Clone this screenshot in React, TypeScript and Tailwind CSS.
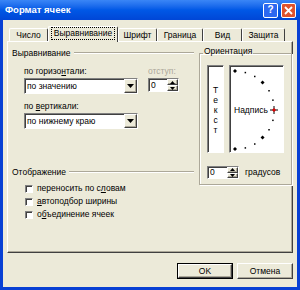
import type {FC, ReactNode} from "react";

const ui = "font-['Liberation_Sans',Arial,sans-serif] text-[8.5px] leading-none text-black";
const face = "bg-[#ecead9]";
const raised = "border border-t-white border-l-white border-r-[#404040] border-b-[#404040] shadow-[inset_-1px_-1px_0_#aca899]";
const sunken = "border border-t-[#808080] border-l-[#808080] border-r-white border-b-white shadow-[inset_1px_1px_0_#404040]";

const Tri: FC<{up?: boolean}> = ({up}) => (
    <svg width="5" height="3" viewBox="0 0 5 3">
        <path d={up ? "M0 3h5L2.5 0z" : "M0 0h5L2.5 3z"} fill="#000"/>
    </svg>
);

const Section: FC<{title: string}> = ({title}) => (
    <div className="h-[12px] flex items-center">
        <span>{title}</span>
        <div className="flex-1 ml-[3px] border-t border-t-[#aca899] border-b border-b-white"/>
    </div>
);

const Select: FC<{value: string}> = ({value}) => (
    <div className={`h-[16px] w-[114px] bg-white flex ${sunken}`}>
        <span className="flex-1 pl-[2px] flex items-center">{value}</span>
        <div className={`w-[13px] ${face} ${raised} flex items-center justify-center`}>
            <svg width="7" height="4" viewBox="0 0 7 4"><path d="M0 0h7L3.5 4z" fill="#000"/></svg>
        </div>
    </div>
);

const Spin: FC<{value: string; className: string}> = ({value, className}) => (
    <div className={`flex bg-white ${sunken} ${className}`}>
        <span className="flex-1 pl-[2px] flex items-center">{value}</span>
        <div className="w-[11px] flex flex-col">
            <div className={`flex-1 ${face} ${raised} flex items-center justify-center`}><Tri up/></div>
            <div className={`flex-1 ${face} ${raised} flex items-center justify-center`}><Tri/></div>
        </div>
    </div>
);

const Check: FC<{children: ReactNode}> = ({children}) => (
    <div className="h-[13px] flex items-center">
        <div className={`w-[8px] h-[8px] bg-white ml-[13px] ${sunken}`}/>
        <span className="ml-[4px]">{children}</span>
    </div>
);

const Tab: FC<{label: string; className: string; active?: boolean}> = ({label, className, active}) => (
    <div className={`${className} flex items-center justify-center border-t border-l border-r border-t-white border-l-white border-r-[#404040] rounded-t-[2px] ${active ? `h-[16px] -mb-px relative z-10 ${face} pb-[2px]` : "h-[13px]"}`}>
        {active
            ? <span className="border border-dotted border-black px-[2px] py-[1px]">{label}</span>
            : <span>{label}</span>}
    </div>
);

const Dial: FC = () => {
    const dots = [];
    for (let a = -90; a <= 90; a += 15) {
        const r = (a * Math.PI) / 180;
        const x = 5 + 39 * Math.cos(r);
        const y = 44 - 39 * Math.sin(r);
        if (a === 0) continue;
        const big = a % 45 === 0;
        dots.push(big
            ? <path key={a} d={`M${x - 2} ${y}L${x} ${y - 2}L${x + 2} ${y}L${x} ${y + 2}z`} fill="#000"/>
            : <rect key={a} x={x - 0.5} y={y - 0.5} width="1.5" height="1.5" fill="#000"/>);
    }
    return (
        <svg width="53" height="86" viewBox="0 0 53 86" className="block">
            {dots}
            <text x="4" y="47" fontSize="8.5" fontFamily="Liberation Sans, Arial, sans-serif" fill="#000">Надпись</text>
            <path d="M40 44h8M44 40v8" stroke="#000" strokeWidth="1"/>
            <path d="M44 42l2 2-2 2-2-2z" fill="#e00000"/>
        </svg>
    );
};

export default function App() {
    return (
        <div className={`w-[300px] h-[290px] flex flex-col bg-[#0840d4] ${ui}`}>
            <div className="h-[20px] flex items-center pl-[5px] pr-[4px] bg-linear-to-b from-[#3a86f6] via-[#0058e6] to-[#0046d6]">
                <span className="flex-1 text-white font-bold text-[9.5px]">Формат ячеек</span>
                <div className="w-[15px] h-[15px] rounded-[2px] border border-white bg-[#2c68f0] flex items-center justify-center text-white font-bold text-[10px]">?</div>
                <div className="w-[15px] h-[15px] ml-[3px] rounded-[2px] border border-white bg-[#e0532d] flex items-center justify-center">
                    <svg width="9" height="9" viewBox="0 0 9 9"><path d="M1 1l7 7M8 1L1 8" stroke="#fff" strokeWidth="1.8"/></svg>
                </div>
            </div>
            <div className={`flex-1 mx-[3px] mb-[3px] ${face} flex flex-col`}>
                <div className="h-[21px] flex items-end pl-[6px]">
                    <Tab label="Число" className="w-[39px]"/>
                    <Tab label="Выравнивание" className="w-[70px]" active/>
                    <Tab label="Шрифт" className="w-[39px]"/>
                    <Tab label="Граница" className="w-[46px]"/>
                    <Tab label="Вид" className="w-[39px]"/>
                    <Tab label="Защита" className="w-[43px]"/>
                </div>
                <div className={`ml-[4px] w-[286px] h-[212px] flex ${raised}`}>
                    <div className="w-[182px] ml-[4px] pt-[5px] flex flex-col">
                        <Section title="Выравнивание"/>
                        <div className="ml-[12px] mt-[8px] flex">
                            <div className="w-[114px] flex flex-col">
                                <div className="h-[11px]">по горизо<u>н</u>тали:</div>
                                <Select value="по значению"/>
                                <div className="h-[11px] mt-[8px]">по <u>в</u>ертикали:</div>
                                <Select value="по нижнему краю"/>
                            </div>
                            <div className="ml-[10px] flex flex-col">
                                <div className="h-[11px] text-[#aca899]">отступ:</div>
                                <Spin value="0" className="w-[31px] h-[14px]"/>
                            </div>
                        </div>
                        <div className="mt-[37px]">
                            <Section title="Отображение"/>
                        </div>
                        <div className="mt-[4px] flex flex-col">
                            <Check>переносить по с<u>л</u>овам</Check>
                            <Check><u>а</u>втоподбор ширины</Check>
                            <Check>о<u>б</u>ъединение ячеек</Check>
                        </div>
                    </div>
                    <fieldset className="ml-[5px] mt-[5px] w-[89px] h-[138px] border border-[#aca899] shadow-[inset_1px_1px_0_white,1px_1px_0_white] px-[7px]">
                        <legend className="ml-[-4px] px-[1px] h-[12px]">Ориентация</legend>
                        <div className="mt-[6px] flex">
                            <div className={`w-[17px] h-[88px] bg-white ${sunken} flex flex-col items-center justify-end pb-[17px]`}>
                                {["Т", "е", "к", "с", "т"].map((c, i) => <span key={i} className="h-[10px] leading-[10px]">{c}</span>)}
                            </div>
                            <div className={`ml-[5px] w-[55px] h-[88px] bg-white ${sunken}`}>
                                <Dial/>
                            </div>
                        </div>
                        <div className="mt-[13px] flex items-center">
                            <Spin value="0" className="w-[32px] h-[13px]"/>
                            <span className="ml-[6px]">градусов</span>
                        </div>
                    </fieldset>
                </div>
                <div className="flex justify-end mt-[10px] pr-[4px]">
                    <div className="w-[56px] h-[16px] border border-black">
                        <div className={`w-full h-full ${raised} flex items-center justify-center`}>OK</div>
                    </div>
                    <div className={`ml-[4px] w-[56px] h-[16px] ${raised} flex items-center justify-center`}>Отмена</div>
                </div>
            </div>
        </div>
    );
}
